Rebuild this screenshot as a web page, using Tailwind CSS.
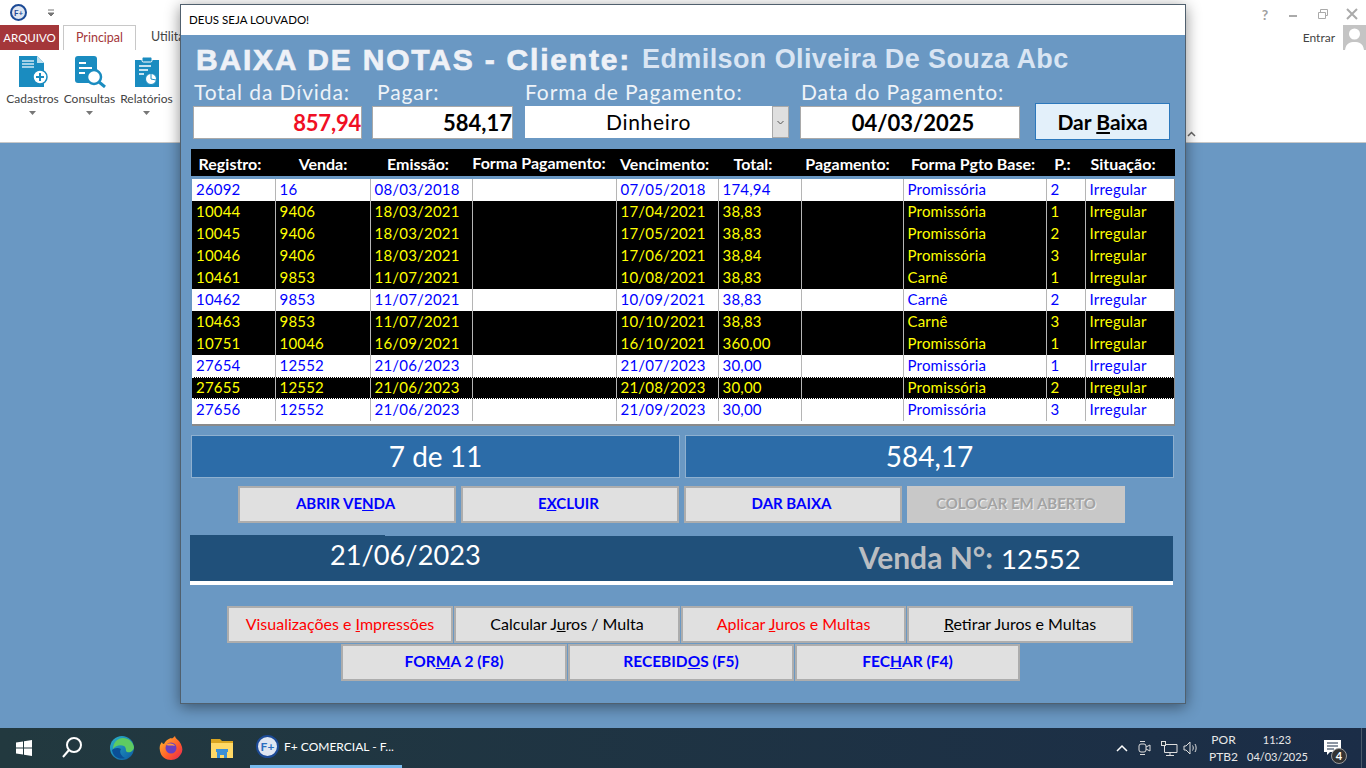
<!DOCTYPE html>
<html lang="pt-BR">
<head>
  <meta charset="UTF-8">
  <title>F+ COMERCIAL</title>
  <script src="https://cdn.jsdelivr.net/npm/@tailwindcss/browser@4"></script>
</head>
<body class="relative w-[1366px] h-[768px] overflow-hidden flex flex-col bg-[#6a98c3] font-[family-name:Lato,sans-serif]">

  <!-- Ribbon -->
  <header class="h-[143px] bg-white border-b border-[#c8c8c8] shrink-0 flex flex-col">
    <div class="h-[25px] flex items-center pl-[10px] pr-[8px] text-[#a0a0a0]">
      <div class="w-[17px] h-[17px] rounded-full bg-[#dfe6f2] border-2 border-[#1c4a96] flex items-center justify-center text-[#1c4a96] text-[8px] font-bold leading-none">F+</div>
      <svg class="ml-[20px]" width="8" height="10" viewBox="0 0 8 10"><path d="M1 2h6M1 5h6L4 8z" stroke="#777" fill="#777"/></svg>
      <div class="ml-auto mt-[3px] flex items-center gap-[17px]">
        <span class="text-[14px] font-bold w-[12px] text-center">?</span>
        <svg width="12" height="12" viewBox="0 0 12 12"><path d="M1 8h8" stroke="#aaa" stroke-width="2"/></svg>
        <svg width="12" height="12" viewBox="0 0 12 12"><path d="M1.500 4.500h7v6h-7zM3.500 4V1.500h7v6H9" fill="none" stroke="#aaa"/></svg>
        <svg width="12" height="12" viewBox="0 0 12 12"><path d="M1 1l10 10M11 1L1 11" stroke="#aaa" stroke-width="2"/></svg>
      </div>
    </div>
    <div class="h-[25px] flex items-stretch">
      <div class="w-[59px] bg-[#a4373a] text-white text-[11.500px] flex items-center justify-center">ARQUIVO</div>
      <div class="ml-[4px] w-[73px] h-[25px] border border-b-0 border-[#c8c8c8] text-[#a4373a] text-[12.500px] flex items-center justify-center bg-white">Principal</div>
      <div class="ml-[15px] text-[#444] text-[12.500px] flex items-center">Utilitários</div>
      <div class="ml-auto flex items-center">
        <span class="text-[12px] text-[#444] mr-[8px]">Entrar</span>
        <div class="w-[23px] h-[25px] bg-[#c4c4c4] overflow-hidden flex justify-center">
          <svg width="23" height="25" viewBox="0 0 23 25"><circle cx="11.500" cy="9" r="5.500" fill="#fff"/><path d="M2 25c1-7 5-8 9.500-8s8.500 1 9.500 8z" fill="#fff"/></svg>
        </div>
      </div>
    </div>
    <div class="flex-1 relative flex pl-[4px] pt-[6px] text-[12px] text-[#444]">
      <div class="w-[57px] flex flex-col items-center">
        <svg width="30" height="32" viewBox="0 0 30 32"><path d="M1 0h18l7 7v24H1z" fill="#1a8cc0"/><path d="M19 0v7h7z" fill="#bfe0ee"/><path d="M4 5h12M4 8h12M4 11h12" stroke="#cfe8f3" stroke-width="1.500"/><circle cx="22" cy="21" r="7" fill="#fff" stroke="#1a8cc0" stroke-width="1.500"/><path d="M22 17v8M18 21h8" stroke="#1a8cc0" stroke-width="2"/></svg>
        <span class="mt-[3px] leading-[16px]">Cadastros</span>
        <svg class="mt-[4px]" width="7" height="4" viewBox="0 0 7 4"><path d="M0 0h7L3.500 4z" fill="#777"/></svg>
      </div>
      <div class="w-[57px] flex flex-col items-center">
        <svg width="32" height="32" viewBox="0 0 32 32"><rect x="1" y="0" width="22" height="27" rx="3" fill="#1a8cc0"/><path d="M5 7h7M5 12h13M5 17h6" stroke="#fff" stroke-width="2"/><circle cx="20" cy="21" r="7" fill="#fff" stroke="#1a8cc0" stroke-width="2.500"/><path d="M25 26l6 5" stroke="#1a8cc0" stroke-width="3"/></svg>
        <span class="mt-[3px] leading-[16px]">Consultas</span>
        <svg class="mt-[4px]" width="7" height="4" viewBox="0 0 7 4"><path d="M0 0h7L3.500 4z" fill="#777"/></svg>
      </div>
      <div class="w-[57px] flex flex-col items-center">
        <svg width="24" height="32" viewBox="0 0 24 32"><path d="M0 4h24v27H0z" fill="#1a8cc0"/><rect x="7" y="1" width="10" height="5" rx="1.500" fill="#1a8cc0" stroke="#fff"/><path d="M4 10h12M4 14h9M4 18h5" stroke="#fff" stroke-width="1.500"/><circle cx="16" cy="23" r="5.500" fill="#fff" stroke="#1a8cc0"/><path d="M16 23v-5M16 23l5 1" stroke="#1a8cc0"/></svg>
        <span class="mt-[3px] leading-[16px]">Relatórios</span>
        <svg class="mt-[4px]" width="7" height="4" viewBox="0 0 7 4"><path d="M0 0h7L3.500 4z" fill="#777"/></svg>
      </div>
      <svg class="absolute left-[1187px] top-[81px]" width="9" height="6" viewBox="0 0 9 6"><path d="M1 5l3.500-3.500L8 5" fill="none" stroke="#666" stroke-width="1.500"/></svg>
    </div>
  </header>

  <div class="flex-1"></div>

  <!-- Taskbar -->
  <footer class="h-[40px] shrink-0 flex items-center text-white bg-gradient-to-r from-[#22393f] to-[#1b2d47]">
    <div class="w-[48px] flex justify-center">
      <svg width="16" height="16" viewBox="0 0 16 16" fill="#fff"><path d="M0 2.500L7 1.500v6H0zM8 1.300L16 0v7.500H8zM0 8.500h7v6L0 13.500zM8 8.500h8V16L8 14.700z"/></svg>
    </div>
    <div class="w-[48px] flex justify-center">
      <svg width="22" height="24" viewBox="0 0 22 24" fill="none" stroke="#fff" stroke-width="2"><circle cx="13" cy="9" r="7"/><path d="M8 14l-6 7"/></svg>
    </div>
    <div class="w-[52px] flex justify-center">
      <svg width="26" height="26" viewBox="0 0 26 26"><defs><linearGradient id="edge" x1="0" y1="0" x2="1" y2="1"><stop offset="0" stop-color="#2bb3c9"/><stop offset="1" stop-color="#0c59a4"/></linearGradient></defs><circle cx="13" cy="13" r="12" fill="url(#edge)"/><path d="M14 3c6 0 10 4 11 9 0 4-4 6-7 5-2-1 0-4-3-6-4-2-9 0-11 3 0-6 4-11 10-11z" fill="#5ecb62"/><path d="M12 14c-2 3 0 7 4 9-6 2-12-1-13-8 2-2 6-3 9-1z" fill="#0a4f96"/></svg>
    </div>
    <div class="w-[46px] flex justify-center">
      <svg width="24" height="24" viewBox="0 0 24 24"><defs><linearGradient id="fox" x1="0" y1="0" x2="1" y2="1"><stop offset="0" stop-color="#ffc02e"/><stop offset="0.600" stop-color="#ff5a2a"/><stop offset="1" stop-color="#e3215e"/></linearGradient></defs><path d="M12 2c1 1 2 0 4-2 0 2 2 3 4 5 3 4 4 8 3 11-2 5-6 8-11 8S2 21 1 15C0 11 1 8 3 6c0 1 1 2 2 2 1-3 4-5 7-6z" fill="url(#fox)"/><circle cx="12" cy="12" r="5.500" fill="#6a3fc0"/><path d="M7 9c3-2 7-2 9 1-3-1-6 0-9-1z" fill="#ff9a3c"/></svg>
    </div>
    <div class="w-[56px] flex justify-center">
      <svg width="22" height="20" viewBox="0 0 22 20"><path d="M0 1h9l2 2h11v4H0z" fill="#d9a521"/><path d="M0 5h22v15H0z" fill="#ffd966"/><path d="M6 13h10v7h-3v-3H9v3H6z" fill="#3b8fd6"/><path d="M5 11h12v3H5z" fill="#3b8fd6"/></svg>
    </div>
    <div class="w-[152px] h-full border-b-[3px] border-[#76b9ed] flex items-center pl-[6px] gap-[5px]">
      <div class="w-[23px] h-[23px] rounded-full bg-[#dfe6f2] border-2 border-[#1c4a96] flex items-center justify-center text-[#2a6fc0] text-[12px] font-bold leading-none shrink-0">F+</div>
      <span class="text-[12px] whitespace-nowrap">F+ COMERCIAL - F...</span>
    </div>
    <div class="ml-auto flex items-center h-full">
      <svg class="mr-[10px]" width="12" height="8" viewBox="0 0 12 8"><path d="M1 7l5-5 5 5" fill="none" stroke="#fff" stroke-width="1.500"/></svg>
      <svg class="mr-[9px]" width="14" height="16" viewBox="0 0 14 16" fill="none" stroke="#ddd"><rect x="1" y="4" width="7" height="8" rx="2"/><path d="M8 7l4-2v6l-4-2M2 1.500h5M2 14.500h5"/></svg>
      <svg class="mr-[5px]" width="17" height="15" viewBox="0 0 17 15" fill="none" stroke="#ddd"><path d="M3.500 3.500H16v8H3.500zM9 11.500v3M5 14.500h8"/><rect x="0.500" y="0.500" width="4" height="4" fill="#22333f"/></svg>
      <svg class="mr-[8px]" width="16" height="14" viewBox="0 0 16 14" fill="none" stroke="#ddd"><path d="M1 5h2l4-4v12L3 9H1zM9.500 4.500c1 1.500 1 3.500 0 5M12 3c1.500 2 1.500 6 0 8"/></svg>
      <div class="w-[33px] text-center text-[12px] leading-[17px] mr-[7px] text-[#e8e8e8]"><div>POR</div><div>PTB2</div></div>
      <div class="w-[60px] text-center text-[11px] leading-[17px] text-[#e8e8e8]"><div>11:23</div><div>04/03/2025</div></div>
      <div class="relative w-[54px] h-full pr-[4px] flex items-center justify-center">
        <svg width="17" height="16" viewBox="0 0 17 16"><path d="M0 0h17v12H6l-3 3v-3H0z" fill="#fff"/><path d="M3 3h11M3 6h11M3 9h7" stroke="#1b2d47"/></svg>
        <span class="absolute left-[24px] top-[20px] w-[16px] h-[16px] rounded-full bg-[#333] border border-[#999] text-[11px] font-bold leading-[14px] text-center">4</span>
      </div>
      <div class="w-[5px] h-full border-l border-[#4a5a6a]"></div>
    </div>
  </footer>

  <!-- Janela Baixa de Notas -->
  <section class="absolute left-[180px] top-[4px] w-[1006px] h-[700px] border border-[#50606e] bg-[#6a98c3] shadow-[0_3px_14px_rgba(0,0,0,0.45)] flex flex-col">
    <div class="h-[30px] bg-white shrink-0 flex items-center pl-[8px] text-[11.500px] text-black">DEUS SEJA LOUVADO!</div>

    <!-- Titulo -->
    <div class="h-[44px] pt-[4px] pl-[15px] flex items-center gap-[11px] font-bold whitespace-nowrap font-[family-name:'Liberation_Sans',sans-serif]">
      <h1 class="text-[30px] tracking-[1.800px] text-[#eef1f7] [-webkit-text-stroke:0.7px_#eef1f7]">BAIXA DE NOTAS - Cliente:</h1>
      <span class="text-[27px] tracking-[0.400px] text-[#d9e5f3]">Edmilson Oliveira De Souza Abc</span>
    </div>

    <!-- Campos -->
    <div class="h-[60px] pl-[12px] flex items-end text-[21px] tracking-[0.900px] text-[#eef3f8]">
      <div class="w-[169px] flex flex-col">
        <label class="pl-[1px] mb-[1px] leading-[26px] whitespace-nowrap">Total da Dívida:</label>
        <div class="h-[33px] bg-white border border-[#a9a9a9] text-[#f00f24] font-bold text-[22px] tracking-[-0.200px] text-right leading-[31px]">857,94</div>
      </div>
      <div class="ml-[10px] w-[141px] flex flex-col">
        <label class="pl-[5px] mb-[1px] leading-[26px]">Pagar:</label>
        <div class="h-[33px] bg-white border border-[#a9a9a9] text-black font-bold text-[22px] tracking-normal text-right leading-[31px]">584,17</div>
      </div>
      <div class="ml-[12px] w-[264px] flex flex-col">
        <label class="mb-[1px] leading-[26px] whitespace-nowrap">Forma de Pagamento:</label>
        <div class="h-[32px] mb-[1px] flex bg-white text-black text-[21px] tracking-[0.700px]">
          <span class="flex-1 text-center leading-[31px]">Dinheiro</span>
          <span class="w-[17px] bg-[#dfdfdf] border border-[#a9a9a9] flex items-center justify-center">
            <svg width="7" height="5" viewBox="0 0 7 5"><path d="M0.500 1l3 3 3-3" fill="none" stroke="#555"/></svg>
          </span>
        </div>
      </div>
      <div class="ml-[11px] w-[220px] flex flex-col">
        <label class="pl-[1px] mb-[1px] leading-[26px] whitespace-nowrap">Data do Pagamento:</label>
        <div class="h-[33px] pl-[6px] bg-white border border-[#a9a9a9] text-black font-bold text-[22px] tracking-normal text-center leading-[31px]">04/03/2025</div>
      </div>
      <button class="ml-[15px] mb-[-1px] w-[135px] h-[37px] bg-[#e3f0fa] border border-[#2c78bc] text-black font-bold text-[21px] tracking-normal">Dar <span class="underline">B</span>aixa</button>
    </div>

    <!-- Tabela -->
    <div class="ml-[10px] mt-[10px] w-[984px] h-[27px] pt-[2px] bg-black text-white font-bold text-[16px] grid grid-cols-[76px_110px_80px_162px_85px_96px_93px_158px_21px_100px] items-center text-center whitespace-nowrap pl-[1px]">
      <span>Registro:</span><span>Venda:</span><span>Emissão:</span><span class="mb-[2px]">Forma Pagamento:</span><span>Vencimento:</span><span>Total:</span><span>Pagamento:</span><span>Forma Pgto Base:</span><span>P.:</span><span>Situação:</span>
    </div>
    <div id="linhas" class="ml-[11px] mt-[3px] w-[983px] h-[247px] bg-white border-b-2 border-r-1 border-[#8a8a8a] text-[15px] tracking-[0.200px] overflow-hidden"></div>

    <!-- Totais -->
    <div class="ml-[10px] mt-[9px] flex gap-[5px]">
      <div class="w-[489px] h-[43px] bg-[#2c6ca8] border border-[#8fb0cf] text-white text-[28px] text-center leading-[40px]">7 de 11</div>
      <div class="w-[489px] h-[43px] bg-[#2c6ca8] border border-[#8fb0cf] text-white text-[28px] text-center leading-[40px]">584,17</div>
    </div>

    <!-- Acoes -->
    <div class="ml-[57px] mt-[8px] flex gap-[5px] text-[15px] font-bold text-[#0000ff]">
      <button class="w-[218px] h-[37px] pb-[2px] bg-[#e0e0e0] border-2 border-[#adadad] pr-[3px]">ABRIR VE<span class="underline">N</span>DA</button>
      <button class="w-[218px] h-[37px] pb-[2px] bg-[#e0e0e0] border-2 border-[#adadad] pr-[3px]">E<span class="underline">X</span>CLUIR</button>
      <button class="w-[218px] h-[37px] pb-[2px] bg-[#e0e0e0] border-2 border-[#adadad] pr-[3px]">DAR BAIXA</button>
      <button class="w-[218px] h-[37px] pb-[2px] bg-[#c8c8c8] text-[#a3a3a3] [text-shadow:1px_1px_0_#eee]">COLOCAR EM ABERTO</button>
    </div>

    <!-- Venda -->
    <div class="ml-[9px] mt-[13px] w-[983px] h-[45px] bg-[#20507a] border-b-[4px] box-content border-white flex items-center text-white relative">
      <span class="absolute left-0 top-[-1px] w-[195px] h-[1px] bg-[#20507a]"></span>
      <span class="ml-[140px] mb-[7px] text-[27.200px] leading-none">21/06/2023</span>
      <span class="ml-[378px] mb-[3px] text-[27.500px] flex items-baseline gap-[8px]"><b class="text-[30px] text-[#b9bdc2]">Venda N°:</b><span>12552</span></span>
    </div>

    <!-- Botoes inferiores -->
    <div class="mt-[21px] ml-[46px] flex gap-[1px] text-[16px]">
      <button class="w-[226px] h-[37px] pb-[2px] bg-[#e0e0e0] border-2 border-[#adadad] text-[#f00]">Visualizações e <span class="underline">I</span>mpressões</button>
      <button class="w-[226px] h-[37px] pb-[2px] bg-[#e0e0e0] border-2 border-[#adadad] text-black">Calcular J<span class="underline">u</span>ros / Multa</button>
      <button class="w-[225px] h-[37px] pb-[2px] bg-[#e0e0e0] border-2 border-[#adadad] text-[#f00]">Aplicar <span class="underline">J</span>uros e Multas</button>
      <button class="w-[226px] h-[37px] pb-[2px] bg-[#e0e0e0] border-2 border-[#adadad] text-black"><span class="underline">R</span>etirar Juros e Multas</button>
    </div>
    <div class="mt-[1px] ml-[160px] flex gap-[1px] text-[15.500px] font-bold text-[#0000ff]">
      <button class="w-[226px] h-[37px] pb-[2px] bg-[#e0e0e0] border-2 border-[#adadad]">FOR<span class="underline">M</span>A 2 (F8)</button>
      <button class="w-[226px] h-[37px] pb-[2px] bg-[#e0e0e0] border-2 border-[#adadad]">RECEBID<span class="underline">O</span>S (F5)</button>
      <button class="w-[225px] h-[37px] pb-[2px] bg-[#e0e0e0] border-2 border-[#adadad]">FEC<span class="underline">H</span>AR (F4)</button>
    </div>
  </section>

  <script>
    // registro, venda, emissao, vencimento, total, forma base, parcela, linha preta
    const dados = [
      ["26092","16","08/03/2018","07/05/2018","174,94","Promissória","2",0],
      ["10044","9406","18/03/2021","17/04/2021","38,83","Promissória","1",1],
      ["10045","9406","18/03/2021","17/05/2021","38,83","Promissória","2",1],
      ["10046","9406","18/03/2021","17/06/2021","38,84","Promissória","3",1],
      ["10461","9853","11/07/2021","10/08/2021","38,83","Carnê","1",1],
      ["10462","9853","11/07/2021","10/09/2021","38,83","Carnê","2",0],
      ["10463","9853","11/07/2021","10/10/2021","38,83","Carnê","3",1],
      ["10751","10046","16/09/2021","16/10/2021","360,00","Promissória","1",1],
      ["27654","12552","21/06/2023","21/07/2023","30,00","Promissória","1",0],
      ["27655","12552","21/06/2023","21/08/2023","30,00","Promissória","2",2],
      ["27656","12552","21/06/2023","21/09/2023","30,00","Promissória","3",0]
    ];
    document.getElementById("linhas").innerHTML = dados.map(([reg, venda, emi, venc, total, forma, p, preta]) => {
      const cor = preta ? "bg-black text-[#ffff00]" : "bg-white text-[#0000ff]";
      const foco = preta === 2 ? "leading-[19px] border-y border-dotted border-white" : "leading-[21px]";
      const cel = [reg, venda, emi, "", venc, total, "", forma, p, "Irregular"]
        .map(t => `<div class="pl-[3.500px] first:pl-[4px] border-r border-[#b5b5b5] last:border-r-0 whitespace-nowrap">${t}</div>`).join("");
      return `<div class="h-[22px] grid grid-cols-[84px_95px_102px_144px_102px_83px_102px_143px_39px_89px] ${cor} ${foco}">${cel}</div>`;
    }).join("");
  </script>
</body>
</html>
